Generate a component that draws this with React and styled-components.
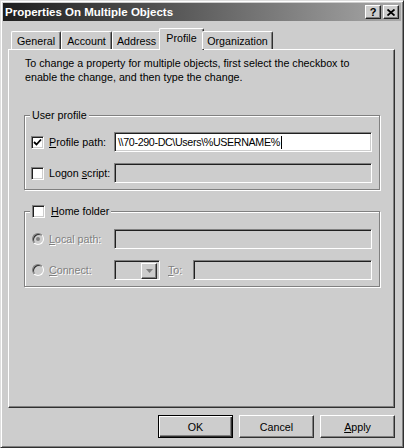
import React from 'react'
import styled, { createGlobalStyle, css } from 'styled-components'

const FACE = '#cdcdcd'

const Global = createGlobalStyle`
  html, body { margin: 0; padding: 0; background: ${FACE}; }
  body { font-family: "Liberation Sans", Arial, sans-serif; font-size: 10.7px; color: #000; }
`

const Window = styled.div`
  width: 404px;
  height: 448px;
  box-sizing: border-box;
  background: ${FACE};
  border: 1px solid;
  border-color: #dedede #303030 #303030 #dedede;
  box-shadow: inset 1px 1px 0 #fff, inset -1px -1px 0 #808080;
  padding: 2px;
  display: flex;
  flex-direction: column;
`

const TitleBar = styled.div`
  height: 18px;
  display: flex;
  align-items: center;
  justify-content: space-between;
  padding: 0 2px 0 2px;
  background: linear-gradient(to right, #1e1e1e 0%, #5a5a5a 45%, #a8a8a8 100%);
`

const Title = styled.div`
  color: #fff;
  font-weight: bold;
  font-size: 11.5px;
  white-space: nowrap;
`

const Caption = styled.div`
  display: flex;
  gap: 2px;
`

const CaptionButton = styled.div`
  width: 16px;
  height: 14px;
  box-sizing: border-box;
  background: ${FACE};
  border: 1px solid;
  border-color: #fff #202020 #202020 #fff;
  box-shadow: inset -1px -1px 0 #808080;
  display: flex;
  align-items: center;
  justify-content: center;
  font-weight: bold;
  font-size: 11px;
  line-height: 1;
`

const Content = styled.div`
  display: flex;
  flex-direction: column;
  padding: 7px 0 0 5px;
`

const TabStrip = styled.div`
  display: flex;
  align-items: flex-end;
  height: 21px;
  padding-left: 3px;
  position: relative;
  z-index: 1;
`

const Tab = styled.div`
  width: ${p => p.$w}px;
  height: 18px;
  box-sizing: border-box;
  display: flex;
  align-items: center;
  justify-content: center;
  white-space: nowrap;
  background: ${FACE};
  border-top: 1px solid #fff;
  border-left: 1px solid #fff;
  border-right: 1px solid #303030;
  border-radius: 2px 2px 0 0;
  box-shadow: inset -1px 0 0 #808080;
  ${p => p.$active && css`
    width: ${p.$w + 4}px;
    height: 22px;
    margin: 0 -2px -1px -2px;
    padding-bottom: 3px;
  `}
`

const Panel = styled.div`
  width: 387px;
  height: 359px;
  box-sizing: border-box;
  border: 1px solid;
  border-color: #fff #303030 #303030 #fff;
  box-shadow: inset -1px -1px 0 #808080;
  padding: 6px 14px 0 15px;
`

const Intro = styled.p`
  margin: 0 0 0 1px;
  line-height: 14px;
`

const Group = styled.div`
  position: relative;
  margin-top: ${p => p.$top}px;
  border: 1px solid #808080;
  box-shadow: inset 1px 1px 0 #fff, 1px 1px 0 #fff;
  padding: ${p => p.$padTop}px 7px 6px 6px;
  display: flex;
  flex-direction: column;
  gap: 11px;
`

const Legend = styled.div`
  position: absolute;
  top: -8px;
  left: 5px;
  height: 14px;
  line-height: 14px;
  padding: 0 2px;
  background: ${FACE};
  display: flex;
  align-items: center;
  gap: 6px;
`

const Row = styled.div`
  display: flex;
  align-items: center;
  height: 20px;
`

const Slot = styled.div`
  width: 18px;
  display: flex;
  align-items: center;
`

const Label = styled.div`
  width: ${p => p.$w || 65}px;
  flex: none;
  box-sizing: border-box;
  padding-left: ${p => p.$pad || 0}px;
  white-space: nowrap;
  ${p => p.$disabled && css`
    color: #808080;
    text-shadow: 1px 1px 0 #fff;
  `}
`

const sunken = css`
  border: 1px solid;
  border-color: #808080 #fff #fff #808080;
  box-shadow: inset 1px 1px 0 #202020, inset -1px -1px 0 ${FACE};
`

const CheckBox = styled.div`
  width: 13px;
  height: 13px;
  box-sizing: border-box;
  flex: none;
  background: #fff;
  ${sunken}
  display: flex;
  align-items: center;
  justify-content: center;
`

const Radio = styled.div`
  width: 12px;
  height: 12px;
  box-sizing: border-box;
  flex: none;
  margin-left: 1px;
  border-radius: 50%;
  background: ${FACE};
  border: 1px solid;
  border-color: #808080 #fff #fff #808080;
  box-shadow: inset 1px 1px 0 #303030;
  display: flex;
  align-items: center;
  justify-content: center;
  &::after {
    content: '';
    display: ${p => (p.$on ? 'block' : 'none')};
    width: 4px;
    height: 4px;
    border-radius: 50%;
    background: #808080;
  }
`

const TextBox = styled.div`
  flex: 1;
  height: 20px;
  box-sizing: border-box;
  ${sunken}
  background: ${p => (p.$disabled ? FACE : '#fff')};
  display: flex;
  align-items: center;
  padding-left: 3px;
  white-space: nowrap;
  letter-spacing: -0.35px;
`

const Caret = styled.span`
  display: inline-block;
  width: 1px;
  height: 13px;
  margin-left: 1px;
  background: #000;
`

const Combo = styled.div`
  width: 46px;
  flex: none;
  height: 20px;
  box-sizing: border-box;
  ${sunken}
  display: flex;
  justify-content: flex-end;
  padding: 2px;
`

const DropButton = styled.div`
  width: 16px;
  height: 16px;
  box-sizing: border-box;
  background: ${FACE};
  border: 1px solid;
  border-color: #fff #303030 #303030 #fff;
  box-shadow: inset -1px -1px 0 #808080;
  display: flex;
  align-items: center;
  justify-content: center;
`

const ButtonRow = styled.div`
  display: flex;
  justify-content: flex-end;
  gap: 6px;
  margin-top: 7px;
  padding-right: 6px;
`

const Button = styled.div`
  width: 75px;
  height: 23px;
  box-sizing: border-box;
  display: flex;
  align-items: center;
  justify-content: center;
  background: ${FACE};
  border: 1px solid;
  border-color: #fff #303030 #303030 #fff;
  box-shadow: inset -1px -1px 0 #808080;
  ${p => p.$default && css`
    border-color: #000;
    box-shadow: inset 1px 1px 0 #fff, inset -1px -1px 0 #303030, inset -2px -2px 0 #808080;
  `}
`

const CloseIcon = () => (
  <svg width="8" height="7" viewBox="0 0 8 7">
    <path d="M0.5 0.5 L7.5 6.5 M7.5 0.5 L0.5 6.5" stroke="#000" strokeWidth="1.8" />
  </svg>
)

const Tick = () => (
  <svg width="9" height="9" viewBox="0 0 9 9">
    <polyline points="1,4 3.5,6.5 8,1.5" fill="none" stroke="#000" strokeWidth="1.8" />
  </svg>
)

const Arrow = () => (
  <svg width="7" height="4" viewBox="0 0 7 4">
    <polygon points="0,0 7,0 3.5,4" fill="#808080" />
  </svg>
)

const tabs = [
  { name: 'General', w: 50 },
  { name: 'Account', w: 51 },
  { name: 'Address', w: 49 },
  { name: 'Profile', w: 41 },
  { name: 'Organization', w: 71 },
]

export default function App() {
  return (
    <>
      <Global />
      <Window>
        <TitleBar>
          <Title>Properties On Multiple Objects</Title>
          <Caption>
            <CaptionButton>?</CaptionButton>
            <CaptionButton><CloseIcon /></CaptionButton>
          </Caption>
        </TitleBar>

        <Content>
          <TabStrip>
            {tabs.map(t => (
              <Tab key={t.name} $w={t.w} $active={t.name === 'Profile'}>{t.name}</Tab>
            ))}
          </TabStrip>

          <Panel>
            <Intro>
              To change a property for multiple objects, first select the checkbox to
              <br />
              enable the change, and then type the change.
            </Intro>

            <Group $top={31} $padTop={16}>
              <Legend>User profile</Legend>
              <Row>
                <Slot><CheckBox><Tick /></CheckBox></Slot>
                <Label><u>P</u>rofile path:</Label>
                <TextBox>\\70-290-DC\Users\%USERNAME%<Caret /></TextBox>
              </Row>
              <Row>
                <Slot><CheckBox /></Slot>
                <Label>Logon <u>s</u>cript:</Label>
                <TextBox $disabled />
              </Row>
            </Group>

            <Group $top={21} $padTop={17}>
              <Legend>
                <CheckBox />
                <span><u>H</u>ome folder</span>
              </Legend>
              <Row>
                <Slot><Radio $on /></Slot>
                <Label $disabled><u>L</u>ocal path:</Label>
                <TextBox $disabled />
              </Row>
              <Row>
                <Slot><Radio /></Slot>
                <Label $disabled><u>C</u>onnect:</Label>
                <Combo><DropButton><Arrow /></DropButton></Combo>
                <Label $disabled $w={33} $pad={8}><u>T</u>o:</Label>
                <TextBox $disabled />
              </Row>
            </Group>
          </Panel>

          <ButtonRow>
            <Button $default>OK</Button>
            <Button>Cancel</Button>
            <Button><u>A</u>pply</Button>
          </ButtonRow>
        </Content>
      </Window>
    </>
  )
}
